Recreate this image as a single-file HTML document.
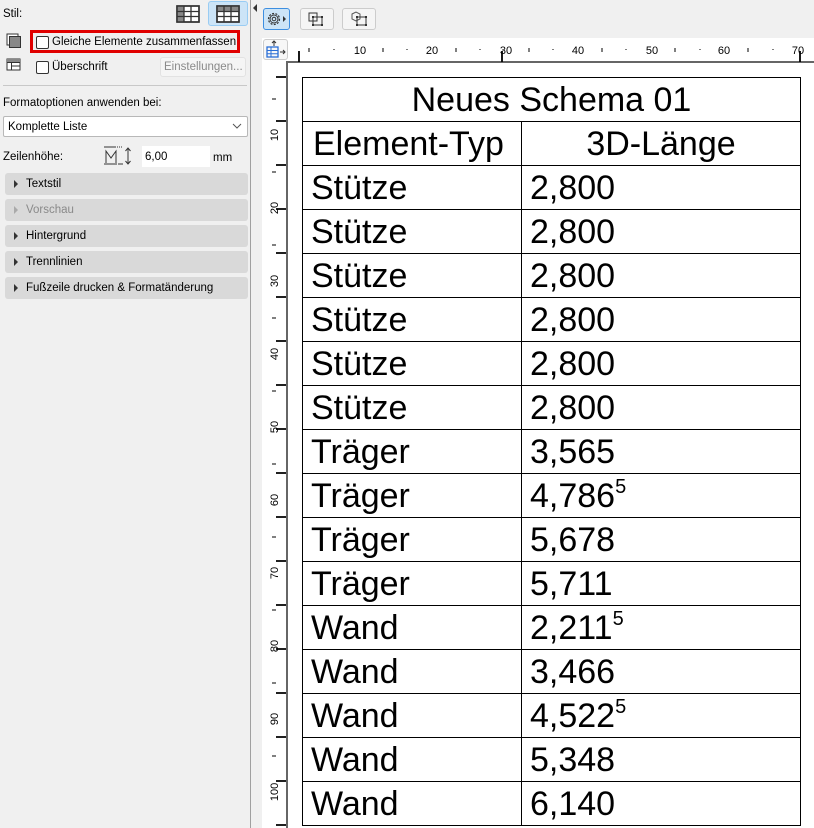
<!DOCTYPE html>
<html style="width:814px;height:828px;overflow:hidden"><head><meta charset="utf-8"><style>
*{margin:0;padding:0;box-sizing:border-box}
body{width:814px;height:828px;overflow:hidden;background:#f0f0f0;font-family:"Liberation Sans",sans-serif;position:relative;font-size:12px;color:#000}
.a{position:absolute}
.bar{position:absolute;left:5px;width:243px;height:22px;background:#d9d9d9;border-radius:3px;font-size:11.5px;line-height:23px;padding-left:21px}
.bar:before{content:"";position:absolute;left:9px;top:7px;border-left:4px solid #333;border-top:4px solid transparent;border-bottom:4px solid transparent}
.bar.dis{color:#8a8a8a}.bar.dis:before{border-left-color:#aaa}
.cb{position:absolute;width:13px;height:13px;border:1px solid #333;border-radius:2px;background:#fff}
table{position:absolute;left:302px;top:77px;border-collapse:collapse;font-size:34px;background:#fff}
td{border:1.5px solid #000;height:44px;padding:0 0 0 8px;line-height:40px;white-space:nowrap}
sup{font-size:20px;vertical-align:14px;line-height:0}
</style></head><body>
<div class="a" style="left:3px;top:8px;font-size:11.5px">Stil:</div>
<svg class="a" style="left:176px;top:5px" width="24" height="18"><rect x="1" y="1" width="22" height="16" fill="#fff" stroke="#333" stroke-width="1.5"/><rect x="1" y="1" width="7" height="16" fill="#888"/><path d="M8 1V17M15 1V17M1 6.5H23M1 11.5H23" stroke="#333" stroke-width="1.3"/><rect x="1" y="1" width="22" height="16" fill="none" stroke="#333" stroke-width="1.5"/></svg>
<div class="a" style="left:208px;top:1px;width:40px;height:25px;background:#cce4f7;border:1px solid #99ccf3;border-radius:3px"></div>
<svg class="a" style="left:216px;top:5px" width="24" height="18"><rect x="1" y="1" width="22" height="16" fill="#fff" stroke="#333" stroke-width="1.5"/><rect x="1" y="1" width="22" height="5.5" fill="#888"/><path d="M8 1V17M15 1V17M1 6.5H23M1 11.5H23" stroke="#333" stroke-width="1.3"/><rect x="1" y="1" width="22" height="16" fill="none" stroke="#333" stroke-width="1.5"/></svg>
<svg class="a" style="left:6px;top:33px" width="16" height="16"><rect x="1" y="1" width="11" height="11" fill="#fff" stroke="#333"/><rect x="3.5" y="3.5" width="11" height="11" fill="#888" stroke="#333"/></svg>
<svg class="a" style="left:6px;top:58px" width="16" height="14"><rect x="1" y="1" width="13" height="11" fill="#fff" stroke="#333"/><rect x="1" y="1" width="13" height="3.5" fill="#888"/><path d="M1 4.5H14M5.5 4.5V12M5.5 8H14" stroke="#333"/></svg>
<div class="a" style="left:30px;top:30px;width:210px;height:23px;border:3px solid #e00000"></div>
<div class="cb" style="left:36px;top:36px"></div>
<div class="a" style="left:52px;top:36px;font-size:11.5px">Gleiche Elemente zusammenfassen</div>
<div class="cb" style="left:36px;top:61px"></div>
<div class="a" style="left:52px;top:61px;font-size:11.5px">Überschrift</div>
<div class="a" style="left:160px;top:57px;width:86px;height:20px;background:#f5f5f5;border:1px solid #e2e2e2;border-radius:3px;color:#8a8a8a;font-size:11.5px;line-height:19px;padding-left:3px">Einstellungen...</div>
<div class="a" style="left:3px;top:85px;width:244px;height:1px;background:#c8c8c8"></div>
<div class="a" style="left:3px;top:97px;font-size:11.5px">Formatoptionen anwenden bei:</div>
<div class="a" style="left:3px;top:116px;width:245px;height:21px;background:#fff;border:1px solid #b8b8b8;border-radius:2px;font-size:11.5px;line-height:20px;padding-left:4px">Komplette Liste</div>
<svg class="a" style="left:232px;top:123px" width="10" height="7"><path d="M1 1L5 5L9 1" fill="none" stroke="#555"/></svg>
<div class="a" style="left:3px;top:151px;font-size:11.5px">Zeilenhöhe:</div>
<svg class="a" style="left:103px;top:145px" width="30" height="22"><path d="M1 2H20" stroke="#333" stroke-dasharray="12 1 1 1 1 1 1 1"/><path d="M3 18V6L8 13L13 6V18M1 19H14M15 19H20" fill="none" stroke="#333"/><path d="M25 3V19M22.5 6L25 3L27.5 6M22.5 16L25 19L27.5 16" fill="none" stroke="#333"/></svg>
<div class="a" style="left:142px;top:146px;width:68px;height:21px;background:#fff;font-size:11.5px;line-height:22px;padding-left:3px">6,00</div>
<div class="a" style="left:213px;top:152px;font-size:11.5px">mm</div>
<div class="bar" style="top:173px">Textstil</div>
<div class="bar dis" style="top:199px">Vorschau</div>
<div class="bar" style="top:225px">Hintergrund</div>
<div class="bar" style="top:251px">Trennlinien</div>
<div class="bar" style="top:277px">Fußzeile drucken &amp; Formatänderung</div>
<div class="a" style="left:250px;top:0;width:1px;height:828px;background:#a0a0a0"></div>
<svg class="a" style="left:251px;top:3px" width="8" height="10"><path d="M6 1V9L2 5Z" fill="#333"/></svg>
<div class="a" style="left:263px;top:8px;width:27px;height:22px;background:#cce4f7;border:1px solid #3d8ee0;border-radius:3px"></div>
<svg class="a" style="left:265px;top:10px" width="24" height="18"><circle cx="9" cy="9" r="5.5" fill="none" stroke="#333" stroke-width="1.2" stroke-dasharray="2 1.4"/><circle cx="9" cy="9" r="4" fill="none" stroke="#333"/><circle cx="9" cy="9" r="1.8" fill="none" stroke="#333"/><path d="M18 6V12L21 9Z" fill="#333"/></svg>
<div class="a" style="left:300px;top:8px;width:34px;height:22px;background:#f5f5f5;border:1px solid #ccc;border-radius:3px"></div>
<svg class="a" style="left:307px;top:11px" width="20" height="17"><path d="M2 2H10V10H2Z M6 6H15V14H6Z" fill="none" stroke="#333"/><rect x="5" y="5" width="2" height="2" fill="#333"/><rect x="14" y="5" width="2" height="2" fill="#333"/><rect x="5" y="13" width="2" height="2" fill="#333"/><rect x="14" y="13" width="2" height="2" fill="#333"/></svg>
<div class="a" style="left:342px;top:8px;width:34px;height:22px;background:#f5f5f5;border:1px solid #ccc;border-radius:3px"></div>
<svg class="a" style="left:350px;top:10px" width="20" height="18"><path d="M2 4L6 2L10 4V9L6 11L2 9Z" fill="none" stroke="#555"/><path d="M7 7H16V15H7Z" fill="none" stroke="#333"/><rect x="6" y="6" width="2" height="2" fill="#333"/><rect x="15" y="6" width="2" height="2" fill="#333"/><rect x="6" y="14" width="2" height="2" fill="#333"/><rect x="15" y="14" width="2" height="2" fill="#333"/></svg>
<div class="a" style="left:262px;top:38px;width:552px;height:790px;background:#fff"></div>
<div class="a" style="left:263px;top:39px;width:25px;height:21px;background:#f7f7f7;border:1px solid #ccc;border-radius:3px"></div>
<svg class="a" style="left:265px;top:40px" width="22" height="19"><path d="M9 1V6M7 3L9 1L11 3" fill="none" stroke="#333"/><rect x="2" y="7" width="11" height="10" fill="none" stroke="#2a6fd6" stroke-width="1.3"/><path d="M2 10.5H13M2 13.8H13M6 7V17" stroke="#2a6fd6"/><path d="M15 12H20M18 10L20 12L18 14" fill="none" stroke="#333"/></svg>
<div class="a" style="left:286px;top:61px;width:528px;height:767px;background:#fff;border-left:2px solid #666;border-top:2px solid #666"></div>
<svg class="a" style="left:286px;top:38px" width="528" height="24">
<g stroke="#000" stroke-width="1">
<path d="M13 13V24M216 13V24M514 13V24" stroke-width="1.8"/>
<path d="M23 10V14M48 11V12M97 10V14M121 11V12M170 10V14M194 11V12M243 10V14M267 11V12M316 10V14M340 11V12M389 10V14M414 11V12M462 10V14M487 11V12"/>
</g>
<g font-family="Liberation Sans" font-size="11" text-anchor="middle"><text x="74" y="16">10</text><text x="146" y="16">20</text><text x="220" y="16">30</text><text x="292" y="16">40</text><text x="366" y="16">50</text><text x="438" y="16">60</text><text x="512" y="16">70</text></g>
</svg>
<svg class="a" style="left:262px;top:62px" width="24" height="766">
<g stroke="#000"><path d="M14 15H24M14 59H24M14 103H24M14 147H24M14 191H24M14 235H24M14 279H24M14 323H24M14 367H24M14 411H24M14 455H24M14 499H24M14 543H24M14 587H24M14 631H24M14 675H24M14 719H24M14 763H24" stroke-width="1.8"/>
<path d="M10 37H14M10 110H14M10 183H14M10 256H14M10 329H14M10 402H14M10 475H14M10 548H14M10 621H14M10 694H14"/></g>
<g font-family="Liberation Sans" font-size="11" text-anchor="middle">
<text transform="translate(16,73) rotate(-90)">10</text><text transform="translate(16,146) rotate(-90)">20</text><text transform="translate(16,219) rotate(-90)">30</text><text transform="translate(16,292) rotate(-90)">40</text><text transform="translate(16,365) rotate(-90)">50</text><text transform="translate(16,438) rotate(-90)">60</text><text transform="translate(16,511) rotate(-90)">70</text><text transform="translate(16,584) rotate(-90)">80</text><text transform="translate(16,657) rotate(-90)">90</text><text transform="translate(16,730) rotate(-90)">100</text></g>
</svg>
<table>
<tr><td colspan="2" style="text-align:center;padding:0;width:498px">Neues Schema 01</td></tr>
<tr><td style="width:219px;padding-left:10px">Element-Typ</td><td style="text-align:center;padding:0;width:279px">3D-Länge</td></tr>
<tr><td>Stütze</td><td>2,800</td></tr>
<tr><td>Stütze</td><td>2,800</td></tr>
<tr><td>Stütze</td><td>2,800</td></tr>
<tr><td>Stütze</td><td>2,800</td></tr>
<tr><td>Stütze</td><td>2,800</td></tr>
<tr><td>Stütze</td><td>2,800</td></tr>
<tr><td>Träger</td><td>3,565</td></tr>
<tr><td>Träger</td><td>4,786<sup>5</sup></td></tr>
<tr><td>Träger</td><td>5,678</td></tr>
<tr><td>Träger</td><td>5,711</td></tr>
<tr><td>Wand</td><td>2,211<sup>5</sup></td></tr>
<tr><td>Wand</td><td>3,466</td></tr>
<tr><td>Wand</td><td>4,522<sup>5</sup></td></tr>
<tr><td>Wand</td><td>5,348</td></tr>
<tr><td>Wand</td><td>6,140</td></tr>
</table>
</body></html>
